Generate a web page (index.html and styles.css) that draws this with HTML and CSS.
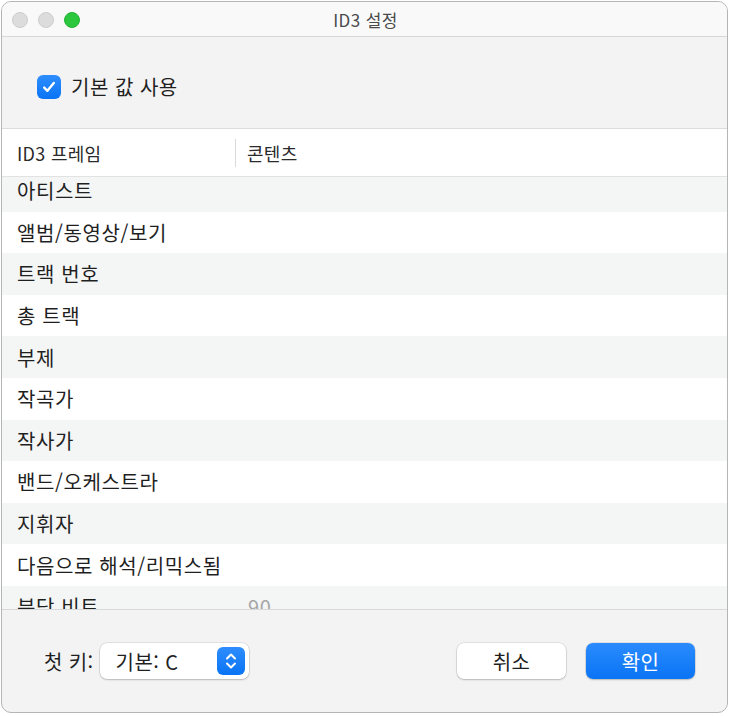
FILE: index.html
```html
<!DOCTYPE html>
<html lang="ko">
<head>
    <meta charset="UTF-8">
    <title>ID3 설정</title>
    <link rel="stylesheet" href="styles.css">
</head>
<body>
    <div class="window">
        <div class="titlebar">
            <div class="lights">
                <span class="light"></span>
                <span class="light"></span>
                <span class="light green"></span>
            </div>
            <div class="title">ID3 설정</div>
        </div>

        <div class="options">
            <label class="check">
                <span class="box">
                    <svg width="16" height="16" viewBox="0 0 16 16"><path d="M3.2 8.6 L6.4 11.8 L12.8 4" fill="none" stroke="#fff" stroke-width="2.4" stroke-linecap="round" stroke-linejoin="round"/></svg>
                </span>
                기본 값 사용
            </label>
        </div>

        <div class="table">
            <div class="table-head">
                <div class="col-frame">ID3 프레임</div>
                <div class="col-content">콘텐츠</div>
            </div>
            <div class="table-body">
                <div class="rows">
                    <div class="row"><span class="col-frame">아티스트</span></div>
                    <div class="row"><span class="col-frame">앨범/동영상/보기</span></div>
                    <div class="row"><span class="col-frame">트랙 번호</span></div>
                    <div class="row"><span class="col-frame">총 트랙</span></div>
                    <div class="row"><span class="col-frame">부제</span></div>
                    <div class="row"><span class="col-frame">작곡가</span></div>
                    <div class="row"><span class="col-frame">작사가</span></div>
                    <div class="row"><span class="col-frame">밴드/오케스트라</span></div>
                    <div class="row"><span class="col-frame">지휘자</span></div>
                    <div class="row"><span class="col-frame">다음으로 해석/리믹스됨</span></div>
                    <div class="row"><span class="col-frame">분당 비트</span><span class="col-content muted">90</span></div>
                </div>
            </div>
        </div>

        <div class="footer">
            <span class="key-label">첫 키:</span>
            <div class="popup">
                <span>기본: C</span>
                <span class="stepper">
                    <svg width="14" height="20" viewBox="0 0 14 20"><path d="M3 7.5 L7 3.5 L11 7.5 M3 12.5 L7 16.5 L11 12.5" fill="none" stroke="#fff" stroke-width="2" stroke-linecap="round" stroke-linejoin="round"/></svg>
                </span>
            </div>
            <div class="actions">
                <button class="btn">취소</button>
                <button class="btn primary">확인</button>
            </div>
        </div>
    </div>
</body>
</html>
```

FILE: styles.css
```css
body {
    margin: 0;
    background: #ffffff;
    font-family: "Noto Sans CJK KR", "Noto Sans", sans-serif;
    color: #1f1f1f;
}

.window {
    margin: 1px 0 0 1px;
    width: 727px;
    height: 712px;
    box-sizing: border-box;
    border: 1px solid #b5b5b5;
    border-radius: 10px;
    overflow: hidden;
    background: #f3f3f3;
    display: flex;
    flex-direction: column;
}

.titlebar {
    height: 34px;
    flex: none;
    background: #f9f9f9;
    border-bottom: 1px solid #d8d8d8;
    position: relative;
    display: flex;
    align-items: center;
    justify-content: center;
}

.lights {
    position: absolute;
    left: 10px;
    top: 10px;
    display: flex;
    gap: 10px;
}

.light {
    width: 14px;
    height: 14px;
    border-radius: 50%;
    background: #dcdcdc;
    border: 1px solid #cdcdcd;
}

.light.green {
    background: #2ac73f;
    border-color: #25b337;
}

.title {
    font-size: 17px;
    letter-spacing: 0.4px;
    color: #4a4a4a;
    padding-left: 2px;
}

.options {
    height: 91px;
    flex: none;
    box-sizing: border-box;
    padding: 38px 0 0 35px;
}

.check {
    display: flex;
    align-items: center;
    gap: 10px;
    font-size: 20px;
    letter-spacing: 0.5px;
    line-height: 24px;
}

.box {
    width: 24px;
    height: 24px;
    border-radius: 6px;
    background: linear-gradient(#2e8dfd, #0a74f5);
    display: flex;
    align-items: center;
    justify-content: center;
}

.table {
    flex: none;
    border-top: 1px solid #dcdcdc;
    border-bottom: 1px solid #d9d9d9;
}

.table-head {
    height: 47px;
    background: #ffffff;
    border-bottom: 1px solid #e2e2e2;
    display: flex;
    align-items: center;
    font-size: 18px;
    letter-spacing: 0.3px;
    color: #2a2a2a;
}

.col-frame {
    width: 233px;
    padding-left: 15px;
    box-sizing: border-box;
}

.table-head .col-content {
    border-left: 1px solid #dadada;
    padding-left: 11px;
    line-height: 28px;
}

.table-body {
    height: 432px;
    overflow: hidden;
}

.rows {
    margin-top: -7px;
}

.row {
    height: 41.6px;
    display: flex;
    align-items: center;
    font-size: 20px;
    letter-spacing: 0.6px;
    background: #ffffff;
}

.row:nth-child(odd) {
    background: #f4f5f5;
}

.row .col-content {
    padding-left: 13px;
}

.muted {
    color: #a6a6a6;
}

.footer {
    flex: 1;
    display: flex;
    align-items: center;
    padding: 0 32px 0 42px;
    font-size: 20px;
    letter-spacing: 0.4px;
}

.key-label {
    margin-right: 6px;
}

.popup {
    width: 149px;
    height: 36px;
    box-sizing: border-box;
    background: #ffffff;
    border-radius: 7px;
    box-shadow: 0 0 0 0.5px rgba(0, 0, 0, 0.15), 0 1px 2px rgba(0, 0, 0, 0.18);
    display: flex;
    align-items: center;
    justify-content: space-between;
    padding: 0 4px 0 16px;
}

.stepper {
    width: 28px;
    height: 28px;
    border-radius: 6px;
    background: linear-gradient(#2e8dfd, #0a74f5);
    display: flex;
    align-items: center;
    justify-content: center;
}

.actions {
    margin-left: auto;
    display: flex;
    gap: 20px;
}

.btn {
    width: 109px;
    height: 36px;
    border: none;
    border-radius: 7px;
    background: #ffffff;
    box-shadow: 0 0 0 0.5px rgba(0, 0, 0, 0.15), 0 1px 2px rgba(0, 0, 0, 0.18);
    font-family: inherit;
    font-size: 20px;
    letter-spacing: 0.4px;
    color: #1f1f1f;
}

.btn.primary {
    background: linear-gradient(#2a8bfd, #0a74f5);
    color: #ffffff;
}
```
